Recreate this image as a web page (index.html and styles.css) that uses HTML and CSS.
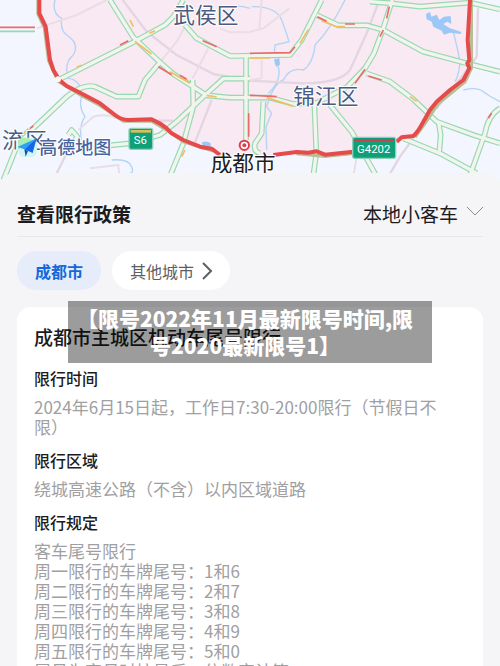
FILE: index.html
```html
<!DOCTYPE html>
<html lang="zh-CN">
<head>
    <meta charset="UTF-8">
    <meta name="viewport" content="width=device-width, initial-scale=1.0">
    <title>查看限行政策</title>
    <link rel="stylesheet" href="styles.css">
</head>
<body>
    <svg class="map" viewBox="0 0 1500 540" role="img" aria-label="成都市限行区域地图">
        <defs>
            <g id="roads">
                <path d="M330 0L400 112L480 187L520 222L620 286L690 293H810L880 312L950 308L1040 262L1095 205L1122 160L1148 90L1177 0"/>
                <path d="M182 236L400 127L495 75L520 50L550 0"/>
                <path d="M555 75L590 115L690 168L870 165L905 120L965 0"/>
                <path d="M10 540L50 440L100 385L200 290Q250 250 285 260L350 290H415L435 240L480 187"/>
                <path d="M330 436L390 430L480 405L530 365L610 290L670 236H750"/>
                <path d="M505 540L550 430L580 320L578 240"/>
                <path d="M738 168V420"/>
                <path d="M950 45L1015 76L1100 76L1150 90L1270 155L1400 190L1500 215"/>
                <path d="M1110 5L1175 10L1260 20L1410 8L1500 28"/>
                <path d="M1100 220L1170 245L1240 298L1310 365L1420 405L1500 430"/>
                <path d="M1210 415L1320 460L1430 520"/>
                <path d="M1316 370L1322 405L1318 455"/>
                <path d="M1500 325Q1465 345 1455 400L1405 540"/>
                <path d="M943 310L949 460L938 540"/>
                <path d="M990 315L1055 395L1130 530"/>
                <path d="M790 305L785 400L765 430Q760 455 780 460"/>
                <path d="M205 405L215 390L232 410L225 420"/>
            </g>
        </defs>

        <path class="zone" d="M118 0V40L137 80L150 180L178 240L240 278L300 310L370 358H455L500 385L550 420L640 448L660 465H820L890 456L950 458L975 464L1060 455L1190 425L1240 408L1270 365L1310 305L1390 240L1408 205L1405 120L1410 0Z"/>

        <g class="river">
            <path d="M165 0Q155 40 185 55Q180 90 200 105Q240 130 220 165Q190 190 205 235Q245 240 245 290Q235 320 255 350Q235 380 245 420"/>
            <path d="M755 20Q830 20 845 60Q860 100 867 125L825 135Q820 175 832 190Q850 240 805 280"/>
            <path d="M1035 0Q990 90 945 135Q940 190 910 210Q870 200 850 240Q820 250 800 320L815 340L798 380L800 450"/>
            <path d="M1358 90Q1375 150 1380 190Q1375 230 1365 245M1390 270Q1430 260 1450 275T1500 305"/>
            <path d="M335 480Q385 475 395 500T375 520"/>
            <path d="M690 20Q720 15 750 25"/>
        </g>
        <path class="lake" d="M1278 42L1290 36L1294 50L1310 44L1318 60L1332 50L1352 48L1354 72L1342 65L1330 72L1348 84L1384 96L1382 102L1350 98L1332 104L1325 92L1300 80L1295 65L1280 58ZM822 180L838 174L840 194L828 200ZM605 428Q620 420 632 430V445L610 440Z"/>

        <g class="rail">
            <path d="M368 0L440 95L530 165L640 222L750 242L910 250Q1020 250 1050 210L1100 100L1138 0"/>
            <path d="M1434 25L1430 170L1390 225L1310 325M1240 415L1200 470L1165 530"/>
            <path d="M635 300L580 440M460 362H520M165 530L200 460"/>
        </g>
        <g class="lane">
            <path d="M110 85L230 45L320 0"/>
            <path d="M480 187L530 125L560 70M578 235L625 145M660 85L690 97H750"/>
            <path d="M750 95L790 85L868 25M785 0L778 85M785 180V235M750 240L785 235"/>
            <path d="M235 390L280 350Q320 340 350 355M270 505L355 495L358 530M1070 470L1060 530"/>
        </g>

        <use href="#roads" class="road-edge"/>
        <use href="#roads" class="road-fill"/>

        <g class="slow">
            <path d="M405 124L455 162M510 215L570 250M230 202L245 196M448 100L465 92M750 174H810M900 130L925 88M965 62L1010 80H1035M800 293L880 318M1230 290L1250 304"/>
            <path d="M60 410L85 386M620 286L650 291M545 470L555 450M390 60L400 80"/>
        </g>
        <g class="jam">
            <path d="M360 135L385 122M475 200L515 224M540 226L560 238M608 122L650 140M750 160L870 158L885 140M952 50L980 64M1035 72H1065"/>
            <path d="M1168 20L1160 55M1150 90L1140 110M1065 250L1095 208M1105 228L1145 240M750 286L830 290M1465 355L1475 340M746 340V410"/>
            <path d="M0 82H105M90 385L100 378"/>
        </g>
        <path class="free" d="M0 94H105"/>

        <path class="ring-shade" d="M114 0V42L133 82L146 182L174 243L240 284L300 316L370 363H455L500 390L550 425L640 453M890 461L975 469L1060 460M1245 412L1275 370L1315 310L1395 245L1414 205V0"/>
        <path class="ring" d="M118 0V40L137 80L150 180L160 210L178 240L200 258L240 278L300 310L345 345Q365 360 385 360L455 358Q480 368 500 385L515 400L550 420L600 440L635 446L660 465M820 465L890 456L925 458L950 454L975 464L1060 455M1190 425L1205 412L1240 408Q1255 395 1270 365L1290 330L1310 305L1350 270L1390 240L1408 205L1402 190L1408 180L1403 120L1410 0"/>
        <circle class="junction" cx="174" cy="238" r="9"/>

        <g class="label">
            <text x="520" y="68">武侯区</text>
            <text x="880" y="312">锦江区</text>
            <text x="6" y="444">流</text>
            <text x="76" y="444">区</text>
        </g>

        <g>
            <rect class="shield" x="387" y="385" width="71" height="63" rx="6"/>
            <path class="band-s" d="M392 390H453V398H392Z"/>
            <text class="shield-text" x="421" y="432">S6</text>
            <rect class="shield" x="1058" y="412" width="129" height="63" rx="6"/>
            <path class="band-g" d="M1063 417H1182V425H1063Z"/>
            <text class="shield-text" x="1121" y="459">G4202</text>
        </g>

        <circle class="pin" cx="733" cy="436" r="14"/>
        <circle class="pin-dot" cx="733" cy="436" r="6"/>
        <text class="city" x="632" y="513">成都市</text>

        <g>
            <rect x="55" y="413" width="56" height="58" rx="16" fill="#d4f4f4"/>
            <path d="M55 447V429Q55 413 71 413Q95 413 104 430Z" fill="#a8efb4"/>
            <path d="M110 415L52 441L73 448Z" fill="#2ba2f6"/>
            <path d="M110 415L73 448L98 459Z" fill="#1468e4"/>
            <path d="M73 448L77 470L84 453Z" fill="#0c51b8"/>
            <text class="brand" x="118" y="461">高德地图</text>
        </g>
    </svg>

    <main class="panel">
        <div class="panel-header">
            <h1>查看限行政策</h1>
            <div class="car-type">
                <select aria-label="车辆类型">
                    <option>本地小客车</option>
                </select>
                <svg class="chevron-down" viewBox="0 0 16 10" aria-hidden="true"><path d="M0 0L8 8L16 0"/></svg>
            </div>
        </div>

        <div class="cities">
            <button class="city-btn active" type="button">成都市</button>
            <button class="city-btn" type="button">其他城市
                <svg class="chevron-right" viewBox="0 0 10 16" aria-hidden="true"><path d="M1 0L9 8L1 16"/></svg>
            </button>
        </div>

        <article class="card">
            <h2>成都市主城区机动车尾号限行</h2>
            <h3>限行时间</h3>
            <p>2024年6月15日起，工作日7:30-20:00限行（节假日不限）</p>
            <h3>限行区域</h3>
            <p>绕城高速公路（不含）以内区域道路</p>
            <h3>限行规定</h3>
            <p>
                客车尾号限行<br>
                周一限行的车牌尾号：1和6<br>
                周二限行的车牌尾号：2和7<br>
                周三限行的车牌尾号：3和8<br>
                周四限行的车牌尾号：4和9<br>
                周五限行的车牌尾号：5和0<br>
                尾号为字母时按最后一位数字计算
            </p>
            <div class="banner">【限号2022年11月最新限号时间,限号2020最新限号1】</div>
        </article>
    </main>
</body>
</html>
```

FILE: styles.css
```css
* {
    box-sizing: border-box;
}

body {
    margin: 0;
    height: 100vh;
    overflow: hidden;
    background: #f5f5f8;
    color: #1c1c1e;
    font-family: "Noto Sans CJK SC", sans-serif;
}

h1, h2, h3, p {
    margin: 0;
}

/* map */
.map {
    display: block;
    width: 100%;
    background: #f3f6fe;
}

.map path {
    stroke-linejoin: round;
}

.zone {
    fill: #f8e9f2;
}

.river {
    fill: none;
    stroke: #b4d3f6;
    stroke-width: 4;
}

.lake {
    fill: #9cc8f8;
}

.rail {
    fill: none;
    stroke: #e3d5e2;
    stroke-width: 7;
}

.lane {
    fill: none;
    stroke: #eadde5;
    stroke-width: 6;
}

.road-edge {
    fill: none;
    stroke: #98d8b4;
    stroke-width: 17;
}

.road-fill {
    fill: none;
    stroke: #f2f5ec;
    stroke-width: 10;
}

.slow, .jam, .free {
    fill: none;
    stroke-width: 5;
}

.slow {
    stroke: #f3bd62;
}

.jam {
    stroke: #ea6b6b;
}

.free {
    stroke: #98d8b4;
}

.ring-shade {
    fill: none;
    stroke: #b9bd94;
    stroke-width: 10;
}

.ring {
    fill: none;
    stroke: #e54b4b;
    stroke-width: 12;
}

.junction {
    fill: #fdf5f6;
}

.label, .city, .brand {
    stroke: #fff;
    stroke-width: 6;
    paint-order: stroke;
}

.label {
    fill: #4a5b82;
    font-size: 65px;
}

.city {
    fill: #1d1d22;
    font-size: 65px;
}

.brand {
    fill: #4965a0;
    font-size: 54px;
    font-weight: 500;
}

.shield {
    fill: #10a079;
    stroke: #8fd0b9;
    stroke-width: 4;
}

.band-s {
    fill: #d8c058;
}

.band-g {
    fill: #cb4253;
}

.shield-text {
    fill: #fff;
    font-family: Roboto, sans-serif;
    font-size: 34px;
    text-anchor: middle;
}

.pin {
    fill: #fff;
    stroke: #dc3f4d;
    stroke-width: 6;
}

.pin-dot {
    fill: #dc3f4d;
}

/* policy panel */
.panel {
    position: relative;
    margin-top: -7px;
    padding: 20px 17px;
    border-radius: 14px 14px 0 0;
    background: #f5f5f8;
}

.panel-header {
    display: flex;
    justify-content: space-between;
    align-items: center;
    height: 44px;
    padding-bottom: 2px;
    border-bottom: 1px solid #e8e8ec;
}

h1 {
    font-size: 19px;
    font-weight: 700;
}

.car-type {
    display: flex;
    align-items: center;
    gap: 8px;
}

.car-type select {
    appearance: none;
    padding: 0;
    border: 0;
    background: none;
    color: inherit;
    font-family: inherit;
    font-size: 19px;
}

.chevron-down {
    width: 16px;
    height: 10px;
    margin-bottom: 4px;
    overflow: visible;
    fill: none;
    stroke: #8c8c90;
}

.cities {
    display: flex;
    gap: 11px;
    margin: 14px 0 17px;
}

.city-btn {
    display: flex;
    align-items: center;
    gap: 8px;
    height: 39px;
    padding: 0 18px;
    border: 0;
    border-radius: 20px;
    background: #fff;
    color: #5f5f63;
    font-family: inherit;
    font-size: 16px;
}

.city-btn.active {
    background: #e7ecfa;
    color: #1468dc;
    font-weight: 700;
}

.chevron-right {
    width: 10px;
    height: 16px;
    overflow: visible;
    fill: none;
    stroke: #5f5f63;
    stroke-width: 2;
}

.card {
    position: relative;
    padding: 17px;
    border-radius: 14px;
    background: #fff;
}

h2 {
    margin-bottom: 17px;
    font-size: 19px;
    font-weight: 500;
    line-height: 26px;
}

h3 {
    margin-bottom: 8px;
    font-size: 16px;
    font-weight: 500;
    line-height: 22px;
}

.card p {
    margin-bottom: 12px;
    padding-right: 24px;
    color: #a0a0a2;
    font-size: 17px;
    font-weight: 400;
    line-height: 20px;
}

.banner {
    position: absolute;
    top: -6px;
    left: 11%;
    right: 11%;
    padding: 4px 14px 4px 4px;
    background: rgba(0, 0, 0, 0.39);
    color: #fff;
    font-size: 21px;
    font-weight: 900;
    line-height: 27px;
    text-align: center;
}
```
